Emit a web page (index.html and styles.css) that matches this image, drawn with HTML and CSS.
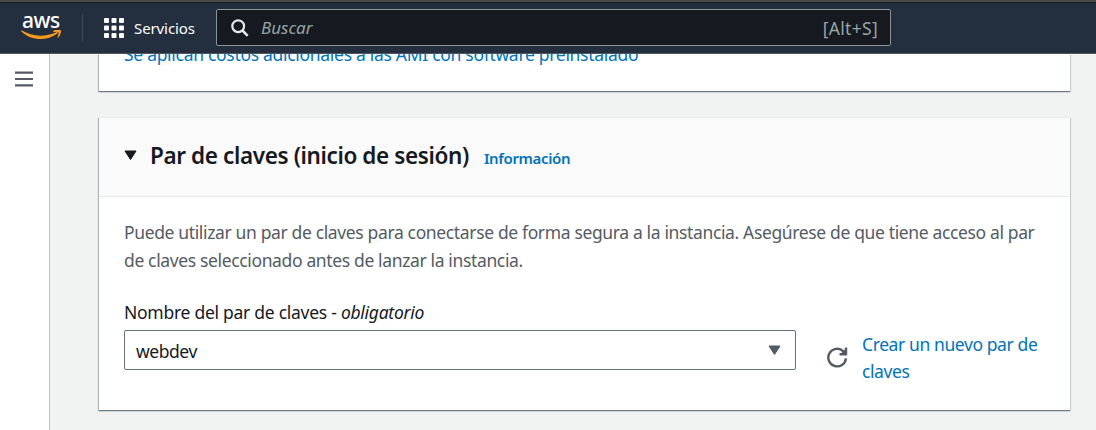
FILE: index.html
```html
<!DOCTYPE html>
<html lang="es">
<head>
<meta charset="utf-8">
<title>Par de claves</title>
<link rel="stylesheet" href="styles.css">
</head>
<body>
<header class="topbar">
  <a class="logo">
    <span class="logo-word">aws</span>
    <svg class="logo-smile" width="42" height="10" viewBox="0 0 42 10"><path d="M.5.3C11 6.800 24 7.300 35.200 2.300c1.300-.6 2.100.4.900 1.400C25.500 11.300 10 10.800.4 1.400-.1.700.1.100.5.300Z" fill="#f79a1e"/><path d="M32.500.700c2.600-1.300 6.700-1.300 7.300-.500.500.800-.2 5.200-2.500 7.300-.6.400-1 .1-.8-.5.700-1.700 1.400-4 1-4.600-.5-.6-2.900-.6-4.700-.4-.7.100-.9-.9-.3-1.300Z" fill="#f79a1e"/></svg>
  </a>
  <span class="divider"></span>
  <a class="services">
    <svg width="20" height="20" viewBox="0 0 20 20" fill="#fff"><rect width="5" height="5" rx="1"/><rect x="7.500" width="5" height="5" rx="1"/><rect x="15" width="5" height="5" rx="1"/><rect y="7.500" width="5" height="5" rx="1"/><rect x="7.500" y="7.500" width="5" height="5" rx="1"/><rect x="15" y="7.500" width="5" height="5" rx="1"/><rect y="15" width="5" height="5" rx="1"/><rect x="7.500" y="15" width="5" height="5" rx="1"/><rect x="15" y="15" width="5" height="5" rx="1"/></svg>
    <span>Servicios</span>
  </a>
  <div class="search">
    <svg width="18" height="18" viewBox="0 0 18 18" fill="none" stroke="#e4e8e8" stroke-width="2.200"><circle cx="7.200" cy="7.200" r="5.900"/><path d="m11.500 11.500 5.200 5.300" stroke-width="2.500"/></svg>
    <span class="placeholder">Buscar</span>
    <span class="shortcut">[Alt+S]</span>
  </div>
</header>
<div class="shell">
  <nav class="rail">
    <svg width="18" height="16" viewBox="0 0 18 16" stroke="#545b64" stroke-width="2.200"><path d="M0 1.700h18M0 8h18M0 14.300h18"/></svg>
  </nav>
  <main class="content">
    <section class="card card-ami"><a class="link ami-link">Se aplican costos adicionales a las AMI con software preinstalado</a></section>
    <section class="card card-key">
      <div class="card-head">
        <svg class="caret" width="13" height="11" viewBox="0 0 13 11"><path d="M1 1h11L6.500 9.500Z" fill="#16191f" stroke="#16191f" stroke-linejoin="round"/></svg>
        <h2>Par de claves (inicio de sesión)</h2>
        <a class="link info">Información</a>
      </div>
      <div class="card-body">
        <p class="description">Puede utilizar un par de claves para conectarse de forma segura a la instancia. Asegúrese de que tiene acceso al par<br>de claves seleccionado antes de lanzar la instancia.</p>
        <div class="label">Nombre del par de claves - <em>obligatorio</em></div>
        <div class="field-row">
          <div class="select">
            <span class="value">webdev</span>
            <svg width="13" height="11" viewBox="0 0 13 11"><path d="M1 1h11L6.500 9.500Z" fill="#545b64" stroke="#545b64" stroke-linejoin="round"/></svg>
          </div>
          <svg class="refresh" width="21" height="21" viewBox="0 0 21 21" fill="none" stroke="#545b64" stroke-width="2.400"><path d="M18.900 11.300a8.800 8.800 0 1 1-2.500-6.900l2.100 2.300"/><path d="M19 .5v6.700h-6.500"/><path d="m14.500 6 3.500-3.500V6Z" fill="#545b64" stroke="none"/></svg>
          <a class="link create">Crear un nuevo par de<br>claves</a>
        </div>
      </div>
    </section>
  </main>
</div>
</body>
</html>
```
FILE: styles.css
```css
* { box-sizing: border-box; }
body {
  margin: 0;
  height: 430px;
  overflow: hidden;
  background: #f1f3f3;
  color: #16191f;
  font: 17.5px/28px "Noto Sans", sans-serif;
}
svg { display: block; flex: none; }
.topbar {
  display: flex;
  position: relative;
  z-index: 1;
  height: 54px;
  padding-left: 21px;
  border-top: 2px solid #4a4a4a;
  border-bottom: 1px solid #505762;
  background: #232f3e;
  box-shadow: inset 0 1px #191f29;
  white-space: nowrap;
}
.logo { display: flex; flex-direction: column; width: 42px; color: #fff; padding-top: 9px; }
.logo-word { font-size: 21px; font-weight: 500; line-height: 19px; letter-spacing: -.5px; padding-left: 1px; }
.logo-smile { margin-top: 0; }
.divider { width: 1px; height: 27px; margin: 12px 0 0 19px; background: #414b58; }
.services { display: flex; align-items: center; gap: 10px; margin-left: 21px; width: 112px; color: #fff; font-size: 15px; }
.services span { letter-spacing: -.1px; }
.search {
  display: flex;
  align-items: center;
  width: 675px;
  height: 37px;
  margin-top: 7px;
  padding: 0 12px 0 14px;
  border: 1px solid #879596;
  border-radius: 2px;
  background: #16191f;
  color: #95a5a6;
}
.placeholder { margin-left: 12px; font-size: 17px; font-style: italic; }
.shortcut { margin-left: auto; letter-spacing: .3px; }
.shell { display: flex; height: 376px; }
.rail { flex: none; width: 50px; padding: 17px 0 0 15px; background: #fff; border-right: 1px solid #b9c1c1; }
.content { flex: none; width: 1046px; padding: 0 26px 0 49px; }
.card { background: #fff; box-shadow: 0 1px 1px #5d707bcc, 1px 1px 1px #5d707b33, -1px 1px 1px #5d707b66; white-space: nowrap; }
.card-ami { display: flex; height: 37px; padding-left: 25px; }
.ami-link { margin-top: -14px; letter-spacing: -.3px; }
.card-key { height: 293px; margin-top: 26px; border-top: 1px solid #e8ebeb; }
.card-head { display: flex; align-items: center; height: 79px; padding: 0 0 3px 25px; background: #fafafa; border-bottom: 1px solid #e6e9e9; }
.caret { margin-top: -1px; }
h2 { margin: 0 0 0 13px; font-size: 22.5px; font-weight: 600; line-height: 30px; letter-spacing: -.38px; }
.info { margin: 4px 0 0 15px; font-size: 15px; font-weight: 600; letter-spacing: -.36px; }
.link { color: #0073bb; }
.card-body { padding: 21px 25px 0; }
.description { margin: 0; color: #545b64; letter-spacing: -.36px; }
.label { margin-top: 24px; letter-spacing: -.27px; }
.field-row { display: flex; align-items: flex-start; margin-top: 4px; }
.select { display: flex; align-items: center; justify-content: space-between; width: 672px; height: 40px; padding: 0 14px 0 11px; border: 1px solid #687078; border-radius: 2px; letter-spacing: -.45px; }
.value { padding-top: 2px; }
.refresh { margin: 17px 0 0 31px; }
.create { margin: 1px 0 0 14px; line-height: 27px; letter-spacing: -.4px; }
```
